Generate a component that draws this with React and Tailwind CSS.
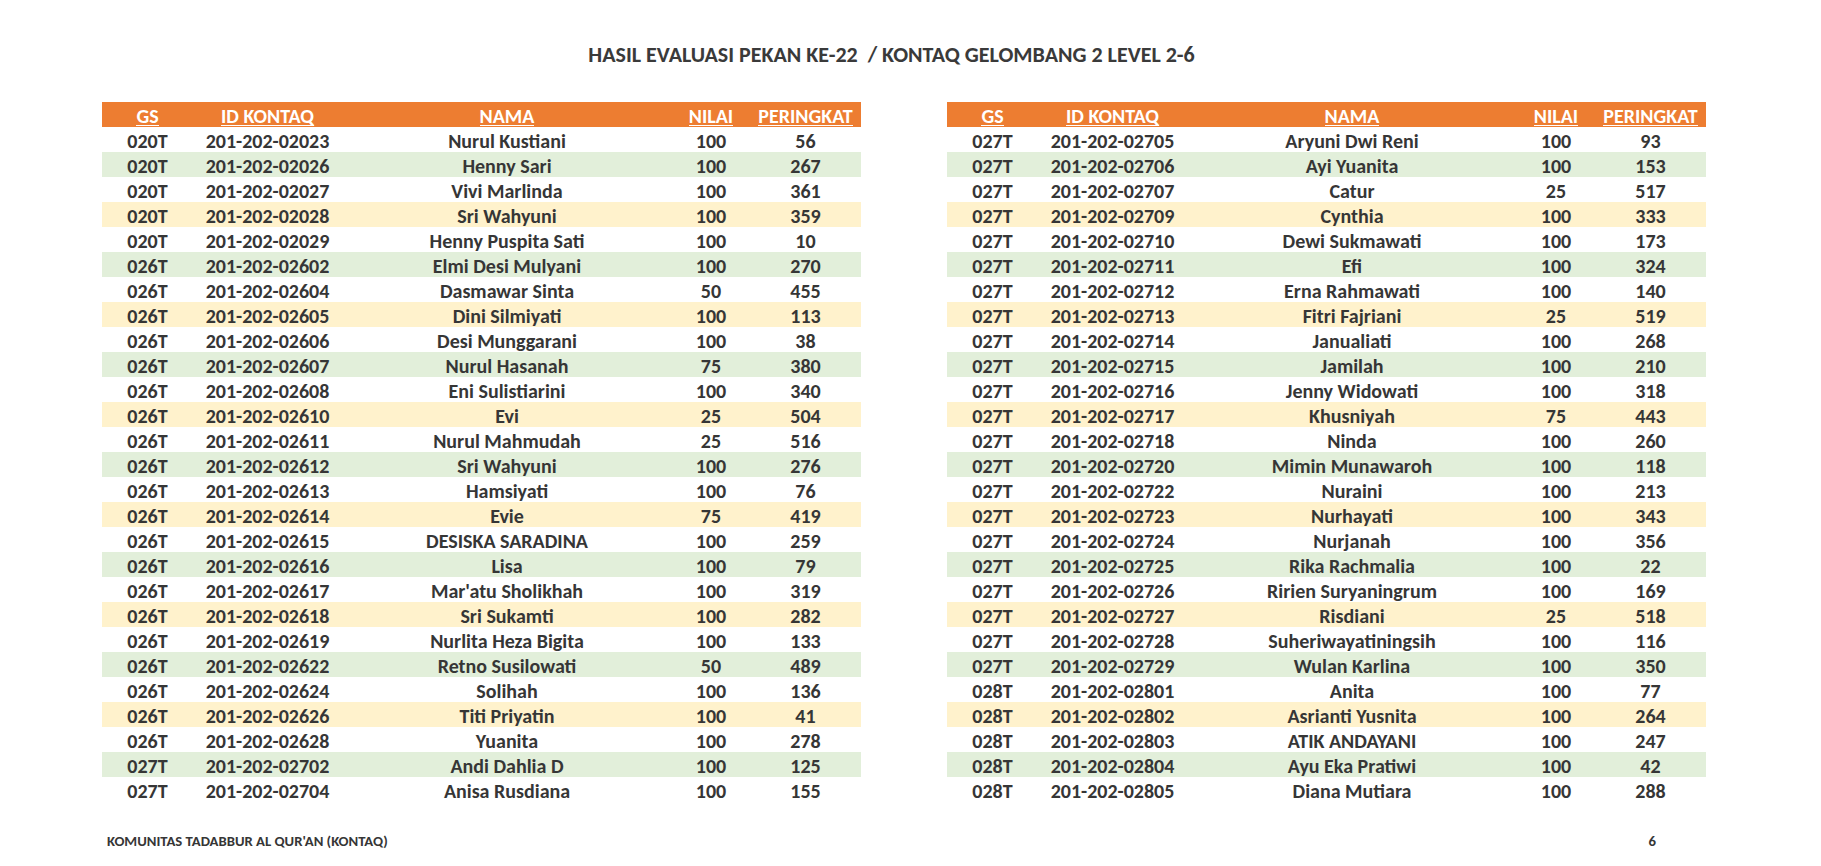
import React from "react";

const leftRows = [
  ["020T", "201-202-02023", "Nurul Kustiani", "100", "56"],
  ["020T", "201-202-02026", "Henny Sari", "100", "267"],
  ["020T", "201-202-02027", "Vivi Marlinda", "100", "361"],
  ["020T", "201-202-02028", "Sri Wahyuni", "100", "359"],
  ["020T", "201-202-02029", "Henny Puspita Sati", "100", "10"],
  ["026T", "201-202-02602", "Elmi Desi Mulyani", "100", "270"],
  ["026T", "201-202-02604", "Dasmawar Sinta", "50", "455"],
  ["026T", "201-202-02605", "Dini Silmiyati", "100", "113"],
  ["026T", "201-202-02606", "Desi Munggarani", "100", "38"],
  ["026T", "201-202-02607", "Nurul Hasanah", "75", "380"],
  ["026T", "201-202-02608", "Eni Sulistiarini", "100", "340"],
  ["026T", "201-202-02610", "Evi", "25", "504"],
  ["026T", "201-202-02611", "Nurul Mahmudah", "25", "516"],
  ["026T", "201-202-02612", "Sri Wahyuni", "100", "276"],
  ["026T", "201-202-02613", "Hamsiyati", "100", "76"],
  ["026T", "201-202-02614", "Evie", "75", "419"],
  ["026T", "201-202-02615", "DESISKA SARADINA", "100", "259"],
  ["026T", "201-202-02616", "Lisa", "100", "79"],
  ["026T", "201-202-02617", "Mar'atu Sholikhah", "100", "319"],
  ["026T", "201-202-02618", "Sri Sukamti", "100", "282"],
  ["026T", "201-202-02619", "Nurlita Heza Bigita", "100", "133"],
  ["026T", "201-202-02622", "Retno Susilowati", "50", "489"],
  ["026T", "201-202-02624", "Solihah", "100", "136"],
  ["026T", "201-202-02626", "Titi Priyatin", "100", "41"],
  ["026T", "201-202-02628", "Yuanita", "100", "278"],
  ["027T", "201-202-02702", "Andi Dahlia D", "100", "125"],
  ["027T", "201-202-02704", "Anisa Rusdiana", "100", "155"],
];

const rightRows = [
  ["027T", "201-202-02705", "Aryuni Dwi Reni", "100", "93"],
  ["027T", "201-202-02706", "Ayi Yuanita", "100", "153"],
  ["027T", "201-202-02707", "Catur", "25", "517"],
  ["027T", "201-202-02709", "Cynthia", "100", "333"],
  ["027T", "201-202-02710", "Dewi Sukmawati", "100", "173"],
  ["027T", "201-202-02711", "Efi", "100", "324"],
  ["027T", "201-202-02712", "Erna Rahmawati", "100", "140"],
  ["027T", "201-202-02713", "Fitri Fajriani", "25", "519"],
  ["027T", "201-202-02714", "Janualiati", "100", "268"],
  ["027T", "201-202-02715", "Jamilah", "100", "210"],
  ["027T", "201-202-02716", "Jenny Widowati", "100", "318"],
  ["027T", "201-202-02717", "Khusniyah", "75", "443"],
  ["027T", "201-202-02718", "Ninda", "100", "260"],
  ["027T", "201-202-02720", "Mimin Munawaroh", "100", "118"],
  ["027T", "201-202-02722", "Nuraini", "100", "213"],
  ["027T", "201-202-02723", "Nurhayati", "100", "343"],
  ["027T", "201-202-02724", "Nurjanah", "100", "356"],
  ["027T", "201-202-02725", "Rika Rachmalia", "100", "22"],
  ["027T", "201-202-02726", "Ririen Suryaningrum", "100", "169"],
  ["027T", "201-202-02727", "Risdiani", "25", "518"],
  ["027T", "201-202-02728", "Suheriwayatiningsih", "100", "116"],
  ["027T", "201-202-02729", "Wulan Karlina", "100", "350"],
  ["028T", "201-202-02801", "Anita", "100", "77"],
  ["028T", "201-202-02802", "Asrianti Yusnita", "100", "264"],
  ["028T", "201-202-02803", "ATIK ANDAYANI", "100", "247"],
  ["028T", "201-202-02804", "Ayu Eka Pratiwi", "100", "42"],
  ["028T", "201-202-02805", "Diana Mutiara", "100", "288"],
];

const headers = ["GS", "ID KONTAQ", "NAMA", "NILAI", "PERINGKAT"];
const cols = "grid grid-cols-[91px_149px_330px_78px_111px]";

// excel-ish banding: white, green, white, yellow
const bandFor = (i) => {
  if (i % 4 === 1) return "bg-[#e2efda]";
  if (i % 4 === 3) return "bg-[#fff2cc]";
  return "bg-white";
};

const ScoreTable = ({ rows }) => (
  <div className="w-[759px]">
    <div className={`${cols} h-[25px] bg-[#ed7d31] text-white`}>
      {headers.map((h) => (
        <div key={h} className="pt-[3px] text-center leading-[22px] whitespace-nowrap">
          <span className="inline-block border-b-[1.5px] border-white leading-[17px]">{h}</span>
        </div>
      ))}
    </div>
    {rows.map((r, i) => (
      <div key={r[1]} className={`${cols} h-[25px] ${bandFor(i)}`}>
        {r.map((cell, j) => (
          <div key={j} className="pt-[3px] text-center leading-[22px] whitespace-nowrap">
            {cell}
          </div>
        ))}
      </div>
    ))}
  </div>
);

export default function App() {
  return (
    <div
      className="flex h-[866px] w-full flex-col bg-white font-bold text-[#363636]"
      style={{ fontFamily: "Carlito, 'Open Sans', 'Liberation Sans', sans-serif" }}
    >
      <h1 className="pt-[41px] pr-[38px] text-center text-[22px] leading-[28px] text-[#3a3a3a]">
        HASIL EVALUASI PEKAN KE-22&nbsp; / KONTAQ GELOMBANG 2 LEVEL 2-6
      </h1>

      <div className="mt-[33px] flex gap-[86px] pl-[102px] text-[20px]">
        <ScoreTable rows={leftRows} />
        <ScoreTable rows={rightRows} />
      </div>

      <footer className="mt-[30px] flex items-center justify-between pl-[107px] pr-[165px] text-[14.7px] leading-[18px]">
        <span>KOMUNITAS TADABBUR AL QUR'AN (KONTAQ)</span>
        <span>6</span>
      </footer>
    </div>
  );
}
